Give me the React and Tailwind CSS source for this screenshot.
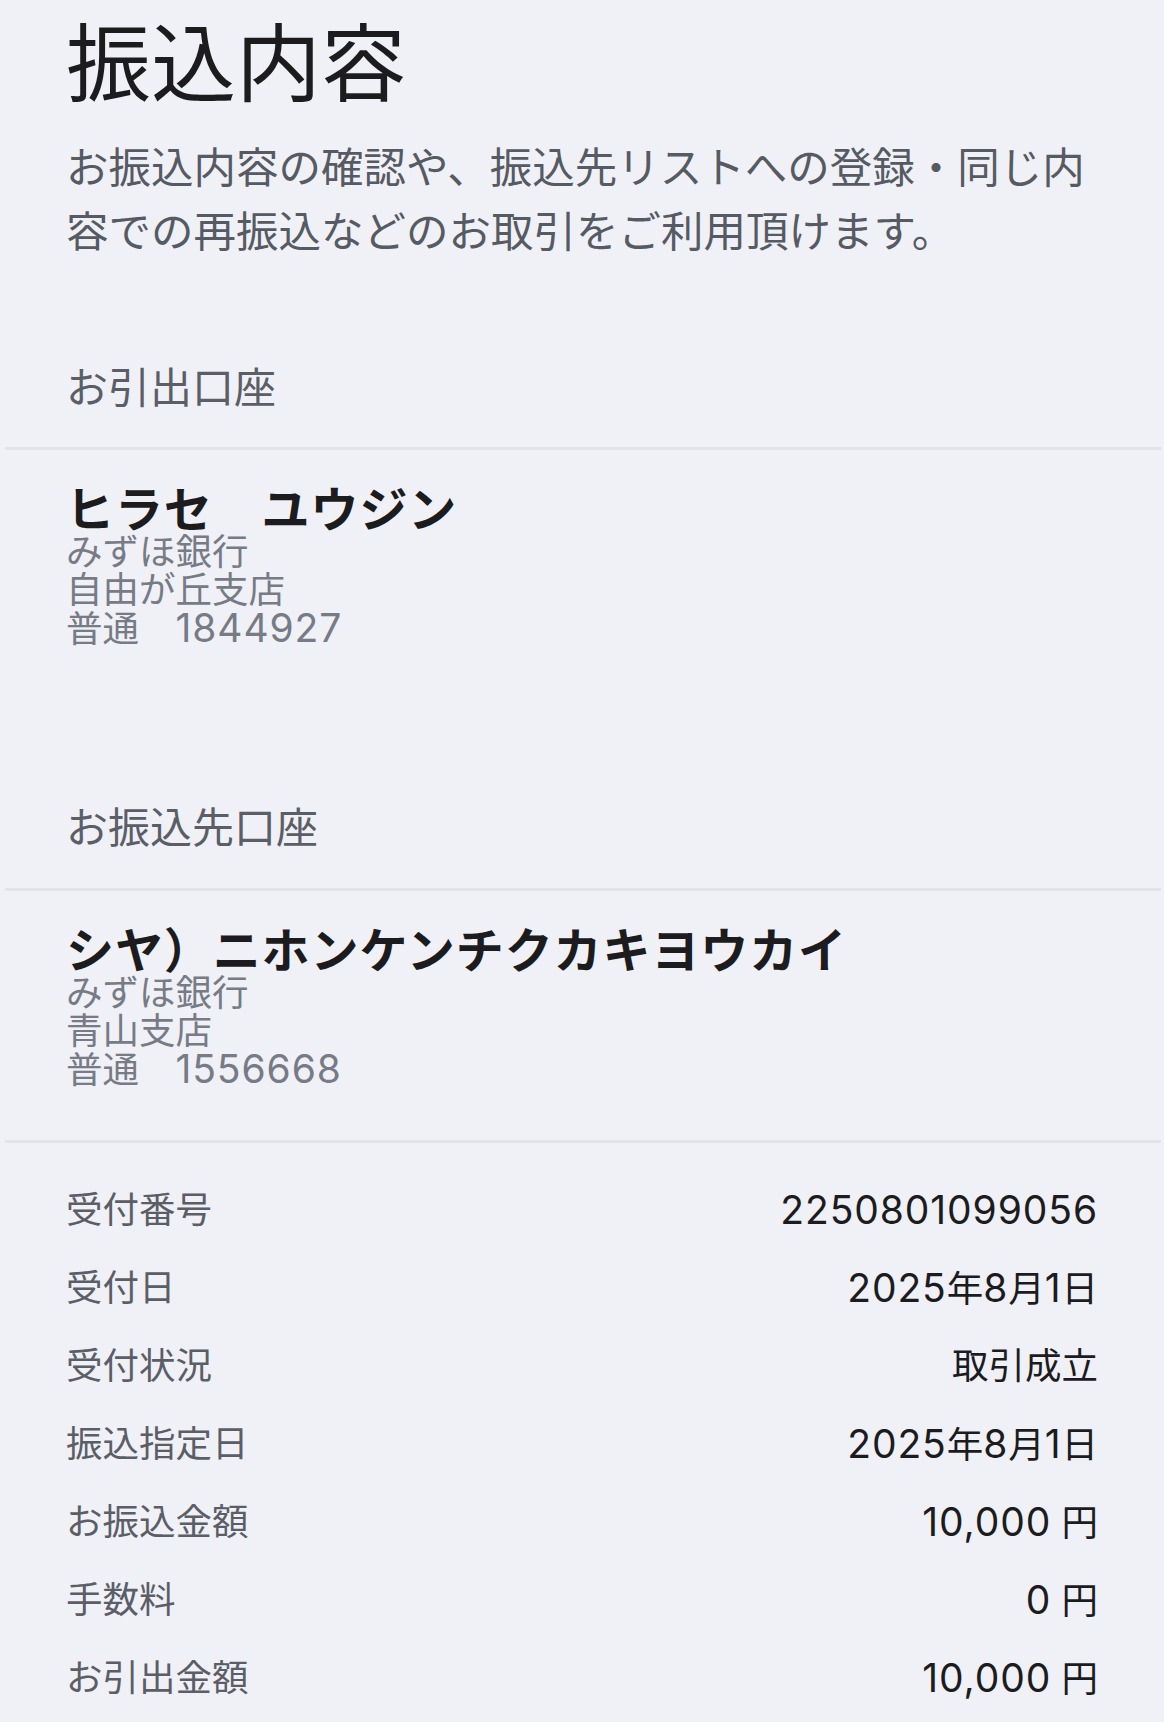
const font = { fontFamily: '"Inter", "Noto Sans CJK JP", sans-serif' }

const details = [
  { label: '受付番号', value: '2250801099056' },
  { label: '受付日', value: '2025年8月1日' },
  { label: '受付状況', value: '取引成立' },
  { label: '振込指定日', value: '2025年8月1日' },
  { label: 'お振込金額', value: '10,000 円' },
  { label: '手数料', value: '0 円' },
  { label: 'お引出金額', value: '10,000 円' },
]

// digits are wider in the original, so give number runs their own size
function Num({ text }) {
  return text.split(/([0-9,]+)/).map((part, i) =>
    /[0-9]/.test(part)
      ? <span key={i} className="text-[39px] tracking-[0.9px]">{part}</span>
      : <span key={i}>{part}</span>
  )
}

function Divider({ className = '' }) {
  return <div className={`ml-[5px] mr-[3px] h-[3px] bg-[#e3e4e9] ${className}`} />
}

function Account({ name, bank, branch, type, number }) {
  return (
    <div className="px-[66px]">
      <div className="text-[48px] leading-[46px] font-bold tracking-[0.9px] text-[#1c1c1e]">{name}</div>
      <div className="text-[36.5px] leading-[38px] text-[#767b86]">
        <div>{bank}</div>
        <div>{branch}</div>
        <div>{type}　<Num text={number} /></div>
      </div>
    </div>
  )
}

export default function App() {
  return (
    <div className="min-h-screen bg-[#f0f1f6] pb-1" style={font}>
      <div className="px-[66px] pt-[15px]">
        <h1 className="text-[85px] leading-[100px] font-normal text-[#1c1c1e]">振込内容</h1>
        <p className="mt-[21px] text-[42.5px] leading-[64px] text-[#565a63]">
          お振込内容の確認や、振込先リストへの登録・同じ内容での再振込などのお取引をご利用頂けます。
        </p>
        <div className="mt-[94px] text-[42px] leading-[60px] text-[#5b5e67]">お引出口座</div>
      </div>
      <Divider className="mt-[29px]" />
      <div className="mt-[37px]">
        <Account name="ヒラセ　ユウジン" bank="みずほ銀行" branch="自由が丘支店" type="普通" number="1844927" />
      </div>

      <div className="mt-[150px] px-[66px] text-[42px] leading-[60px] text-[#5b5e67]">お振込先口座</div>
      <Divider className="mt-[30px]" />
      <div className="mt-[37px]">
        <Account name="シヤ）ニホンケンチクカキヨウカイ" bank="みずほ銀行" branch="青山支店" type="普通" number="1556668" />
      </div>
      <Divider className="mt-[51px]" />

      <div className="mt-[28px] pl-[66px] pr-[66px]">
        {details.map((d) => (
          <div key={d.label} className="flex h-[78px] items-center justify-between text-[36.5px] leading-[44px]">
            <span className="text-[#5b5e67]">{d.label}</span>
            <span className="text-[#1c1c1e]"><Num text={d.value} /></span>
          </div>
        ))}
      </div>
    </div>
  )
}
